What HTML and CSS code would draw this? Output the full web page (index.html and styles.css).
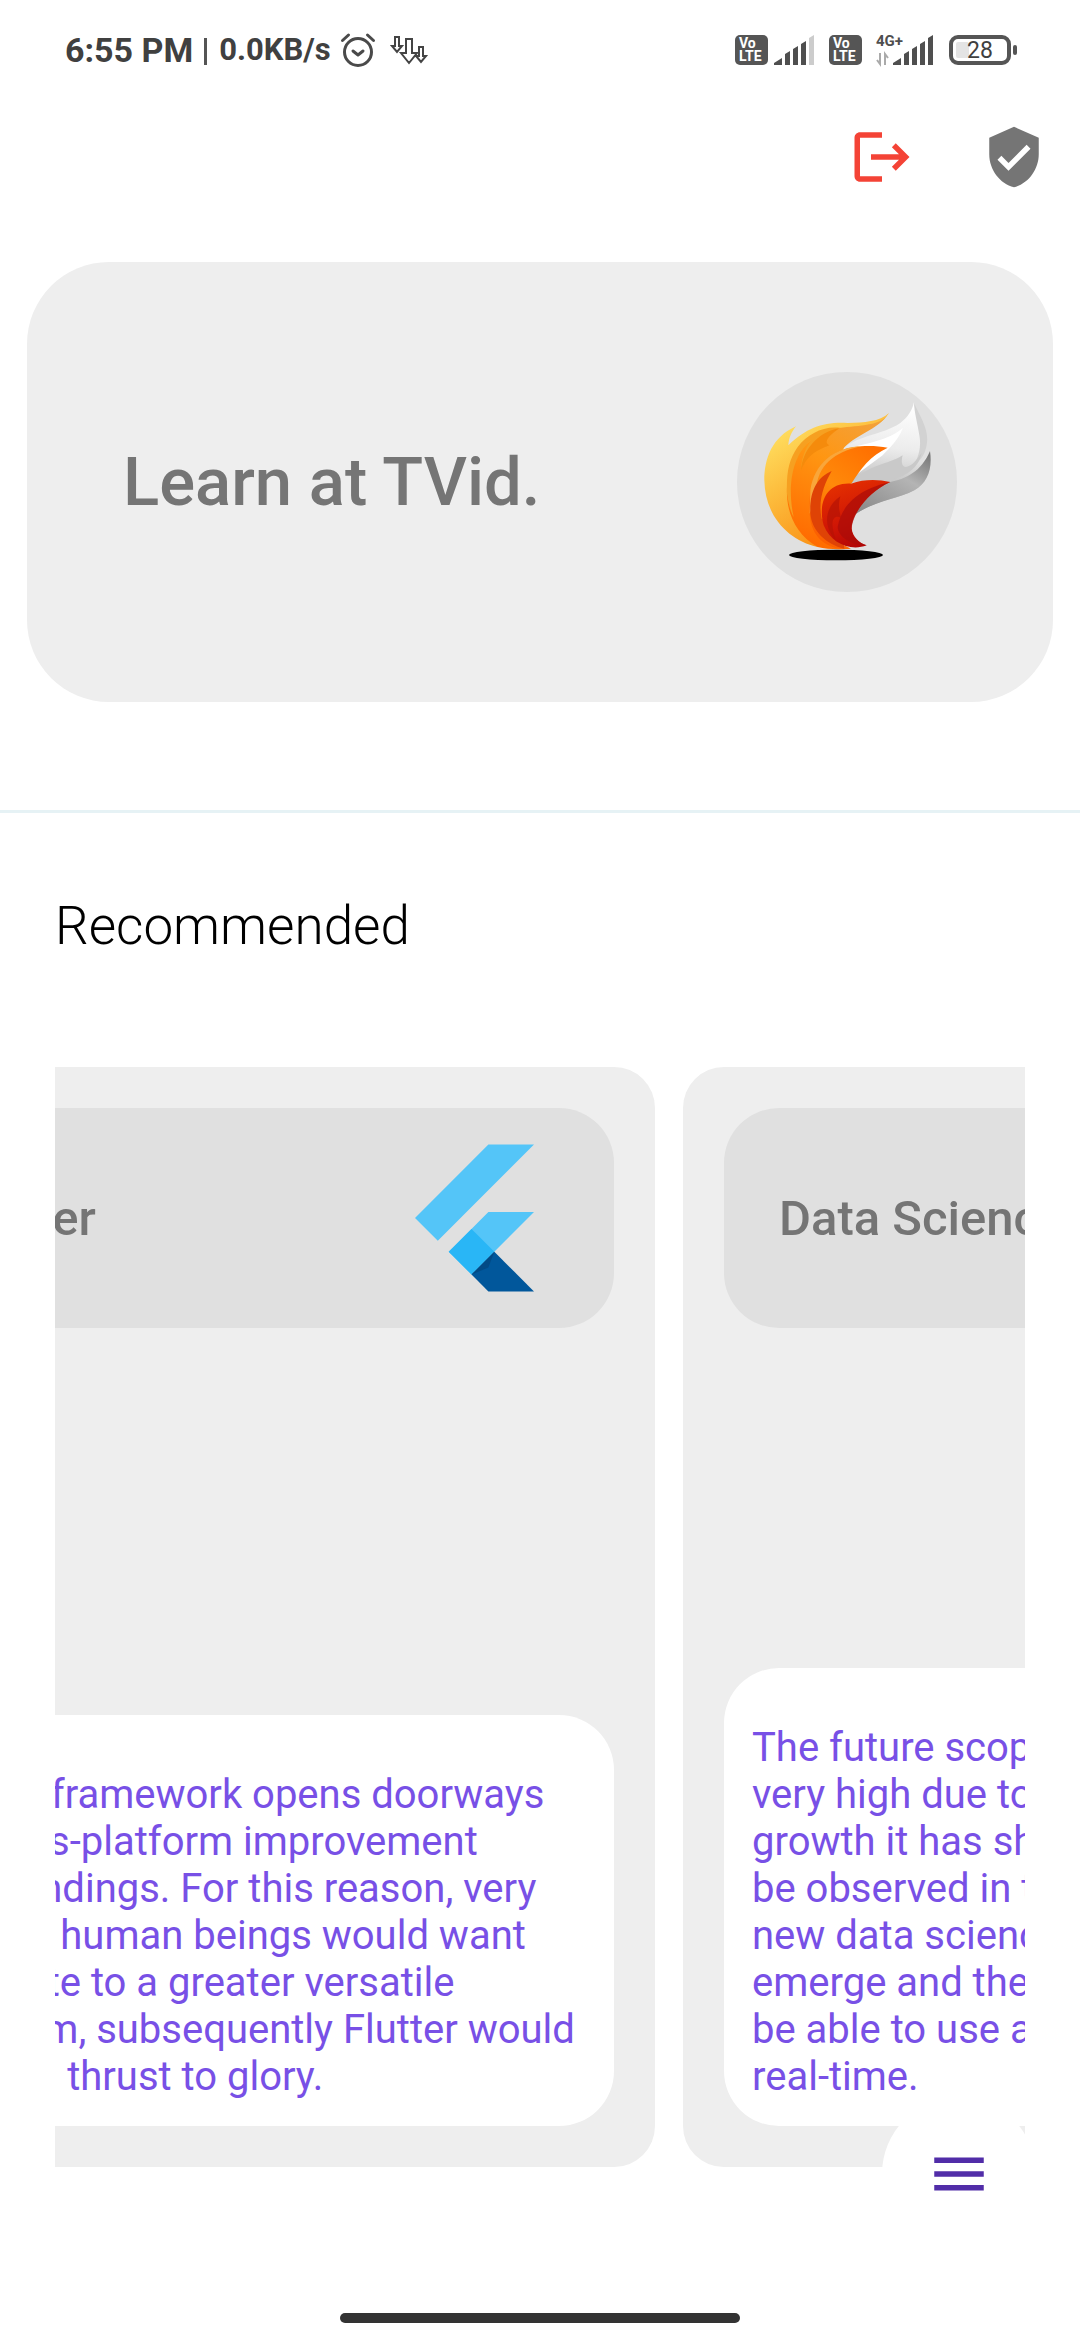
FILE: index.html
```html
<!DOCTYPE html>
<html lang="en">
<head>
<meta charset="utf-8">
<meta name="viewport" content="width=device-width, initial-scale=1">
<title>TVid</title>
<link rel="stylesheet" href="styles.css">
</head>
<body>
<div class="screen">
  <div class="status">
    <div class="status-left">
      <span class="clock">6:55 PM</span>
      <span class="bar"></span>
      <span class="speed">0.0KB/s</span>
      <svg class="alarm" viewBox="0 0 36 36" fill="none" stroke="#4a4a4a" stroke-width="3" stroke-linecap="round" stroke-linejoin="round"><circle cx="18" cy="20" r="13.5"/><path d="M13 19l5 4 5-4M2.500 8.500l6-5.500M33.500 8.500l-6-5.500"/></svg>
      <svg class="arrows" viewBox="0 0 36 30" fill="none" stroke="#444" stroke-width="2"><path d="M4 2h4v9h3l-5 6-5-6h3zM15 4h6v14h5l-8 10-8-10h5zM28 12h4v9h3l-5 6-5-6h3z"/></svg>
    </div>
    <div class="status-right">
      <svg class="volte" viewBox="0 0 33 30"><rect width="33" height="30" rx="5" fill="#555"/><text x="4" y="13" class="volte-text">Vo</text><text x="4" y="26" class="volte-text">LTE</text></svg>
      <svg class="signal" viewBox="0 0 41 30" fill="#4f4f4f"><path d="M0 30v-2l8-5v7zM11 30V19l5-3v14zM19 30V14l5-3v19zM27 30V9l5-3v24z"/><path d="M35 30V3l5-3v30z" fill="#ccc"/></svg>
      <svg class="volte second" viewBox="0 0 33 30"><rect width="33" height="30" rx="5" fill="#555"/><text x="4" y="13" class="volte-text">Vo</text><text x="4" y="26" class="volte-text">LTE</text></svg>
      <svg class="mobile" viewBox="0 0 58 32" fill="#4f4f4f"><text x="0" y="12" class="net-text">4G+</text><path d="M17 31v-2l8-5v7zM28 31V20l5-3v14zM36 31V15l5-3v19zM44 31V10l5-3v24zM52 31V4l5-3v30z"/><path d="M4 19v11l-3-4M9 31V20l3 4" fill="none" stroke="#aaa" stroke-width="2"/></svg>
      <svg class="battery" viewBox="0 0 69 30"><rect x="2" y="2" width="58" height="26" rx="7" fill="none" stroke="#555" stroke-width="4"/><rect x="7" y="7" width="13" height="16" rx="2" fill="#e4e4e4"/><rect x="64" y="10" width="4" height="10" rx="2" fill="#555"/><text x="18" y="23" class="battery-text">28</text></svg>
    </div>
  </div>

  <header class="appbar">
    <button class="icon-button logout" aria-label="Log out"><svg viewBox="0 0 24 24" fill="currentColor"><path d="M17 7l-1.410 1.410L18.170 11H8v2h10.170l-2.580 2.580L17 17l5-5zM4 5h8V3H4c-1.100 0-2 .9-2 2v14c0 1.100.9 2 2 2h8v-2H4V5z"/></svg></button>
    <button class="icon-button" aria-label="Privacy"><svg viewBox="0 0 24 24" fill="currentColor"><path d="M12 1L3 5v6c0 5.550 3.840 10.740 9 12 5.160-1.260 9-6.450 9-12V5l-9-4zm-2 16l-4-4 1.410-1.410L10 14.170l6.590-6.590L18 9l-8 8z"/></svg></button>
  </header>

  <main>
    <section class="hero">
      <h1>Learn at TVid.</h1>
      <svg class="logo" viewBox="108 95 660 660" aria-hidden="true">
        <defs>
          <linearGradient id="gold" x1="0" y1="0" x2="0.6" y2="1"><stop offset="0" stop-color="#ffec6e"/><stop offset="0.45" stop-color="#fdc040"/><stop offset="1" stop-color="#f98a10"/></linearGradient>
          <linearGradient id="amber" x1="0.7" y1="0" x2="0.3" y2="1"><stop offset="0" stop-color="#f3a13a"/><stop offset="0.4" stop-color="#ff9612"/><stop offset="1" stop-color="#ff6a00"/></linearGradient>
          <linearGradient id="orange" x1="0.8" y1="0" x2="0.2" y2="1"><stop offset="0" stop-color="#ff6f00"/><stop offset="0.5" stop-color="#ff8a0a"/><stop offset="1" stop-color="#fa5a00"/></linearGradient>
          <linearGradient id="red" x1="0.2" y1="0" x2="0.6" y2="1"><stop offset="0" stop-color="#e63200"/><stop offset="0.6" stop-color="#cf1505"/><stop offset="1" stop-color="#b00505"/></linearGradient>
          <linearGradient id="silver" x1="0.5" y1="0" x2="0.4" y2="1"><stop offset="0" stop-color="#fff"/><stop offset="0.4" stop-color="#ececec"/><stop offset="1" stop-color="#a0a0a0"/></linearGradient>
          <linearGradient id="steel" x1="0.9" y1="0" x2="0.2" y2="1"><stop offset="0" stop-color="#777"/><stop offset="0.4" stop-color="#b4b4b4"/><stop offset="1" stop-color="#8c8c8c"/></linearGradient>
        </defs>
        <circle cx="438" cy="425" r="330" fill="#e0e0e0"/>
        <path d="M415 335C460 285 545 285 598 248C622 230 634 208 639 186C645 228 672 258 663 315C658 342 648 358 640 374C664 364 680 350 687 332C695 385 680 428 640 450C590 476 520 482 465 520L440 430Z" fill="url(#silver)"/>
        <path d="M639 186C652 225 694 272 673 330C668 348 655 363 640 374C652 350 662 320 655 285C650 250 640 220 639 186Z" fill="#d2d2d2"/>
        <path d="M425 328C490 310 565 300 606 262C592 300 565 322 545 345L470 400Z" fill="#fff"/>
        <path d="M450 430C500 370 560 375 605 345C598 372 606 385 622 378C640 372 650 350 662 338C654 380 620 405 575 418L460 470Z" fill="#c9c9c9"/>
        <path d="M462 522C485 470 530 440 568 425C615 415 660 395 687 332C695 385 680 428 640 450C590 476 520 482 462 522Z" fill="url(#steel)"/>
        <path d="M285 258C213 290 190 355 190 420C192 528 262 600 350 620L380 450L425 328C450 270 530 275 564 218C535 245 490 246 440 248C370 244 320 260 262 315C264 290 272 275 285 258Z" fill="url(#gold)"/>
        <path d="M425 328C455 285 535 268 564 218C544 258 475 254 415 263C320 280 265 350 258 440C254 510 280 580 350 620C375 626 405 628 435 626L350 480C370 400 395 360 425 328Z" fill="url(#amber)"/>
        <path d="M300 395C305 330 350 280 420 263C370 255 320 280 290 320C262 360 256 400 258 460C264 500 272 520 278 530C260 450 268 350 330 300C310 330 300 360 300 395Z" fill="#f6a021"/>
        <path d="M300 392C320 340 350 330 385 315C370 308 375 292 415 264C350 275 304 330 300 392Z" fill="#f58b0c"/>
        <path d="M560 322C510 345 478 385 450 432L400 600L450 625C390 632 330 600 326 520C318 400 370 325 480 318C510 316 535 318 560 322Z" fill="url(#orange)"/>
        <path d="M328 450C340 370 400 320 480 318C400 335 350 375 345 450C340 490 330 510 326 520Z" fill="#f9a63a"/>
        <path d="M392 392C350 410 325 450 328 520C332 570 375 612 430 625L420 560L362 535C350 480 370 430 392 392Z" fill="#df4306"/>
        <path d="M568 425C500 455 450 525 452 565C455 590 475 608 497 615C450 634 390 610 368 555C350 490 375 425 450 430C490 416 530 417 568 425Z" fill="url(#red)"/>
        <path d="M568 425C500 440 425 475 410 560C412 590 450 615 497 615C470 606 452 590 452 565C455 520 500 455 568 425Z" fill="#a90c08" opacity="0.7"/>
        <path d="M418 468C410 500 416 515 420 532C395 520 385 545 405 600C365 560 370 500 418 468Z" fill="#b51206" opacity="0.7"/>
        <ellipse cx="405" cy="644" rx="141" ry="16"/>
      </svg>
    </section>

    <section class="recommended">
      <h2>Recommended</h2>
      <div class="carousel">
        <article class="card flutter">
          <div class="card-head">
            <h3>Flutter</h3>
            <svg class="flutter-logo" viewBox="0 0 120 148" aria-hidden="true"><path d="M74 0h46L23 97 0 74zM74 68h46L57 131l-23-23z" fill="#54c5f8"/><path d="M34 108l23-23 23 23-23 23z" fill="#29b6f6"/><path d="M57 131l23-23 40 40H74z" fill="#01579b"/><path d="M57 131l17-7 6-16z" fill="#024a85"/></svg>
          </div>
          <p>Flutter framework opens doorways<br>to cross-platform improvement<br>surroundings. For this reason, very<br>quickly human beings would want<br>to locate to a greater versatile<br>platform, subsequently Flutter would<br>general thrust to glory.</p>
        </article>
        <article class="card">
          <div class="card-head"><h3>Data Science</h3></div>
          <p>The future scope of Data Science is<br>very high due to the exponential<br>growth it has shown. It can easily<br>be observed in the years that<br>new data science jobs will<br>emerge and the experts will<br>be able to use all of it in<br>real-time.</p>
        </article>
      </div>
    </section>
  </main>

  <button class="fab" aria-label="Menu"><svg viewBox="0 0 24 24" fill="currentColor"><path d="M3 18h18v-2H3v2zm0-5h18v-2H3v2zm0-7v2h18V6H3z"/></svg></button>
  <div class="home-bar"></div>
</div>
</body>
</html>
```
FILE: styles.css
```css
* { box-sizing: border-box; }
body { margin: 0; background: #fff; font-family: Roboto, sans-serif; color: #000; }
h1, h2, h3, p { margin: 0; font-weight: 400; }
button { border: 0; padding: 0; background: none; }
svg { display: block; flex: none; }

.screen { position: relative; display: flex; flex-direction: column; min-height: 100vh; overflow: hidden; }

.status { display: flex; justify-content: space-between; height: 91px; padding: 8px 62px 0 65px; color: #404040; }
.status svg { overflow: visible; }
.status-left, .status-right { display: flex; align-items: center; }
.clock { font-size: 34px; font-weight: 700; }
.bar { width: 3px; height: 27px; margin: 4px 12px 0 11px; background: #555; }
.speed { font-size: 31px; font-weight: 700; }
.alarm { width: 36px; height: 36px; margin-left: 9px; }
.arrows { width: 36px; height: 30px; margin-left: 15px; }
.volte { width: 33px; height: 30px; }
.second { margin-left: 14px; }
.volte-text { font: 700 14px Roboto, sans-serif; fill: #fff; }
.signal { width: 41px; height: 30px; margin-left: 6px; }
.mobile { width: 58px; height: 32px; margin-left: 14px; }
.net-text { font: 700 15px Roboto, sans-serif; }
.battery { width: 69px; height: 30px; margin-left: 15px; }
.battery-text { font: 400 23px Roboto, sans-serif; fill: #404040; }

.appbar { display: flex; justify-content: flex-end; }
.icon-button { display: flex; align-items: center; justify-content: center; width: 132px; height: 132px; color: #757575; }
.icon-button svg, .fab svg { width: 66px; height: 66px; }
.icon-button.logout { color: #f44336; }

.hero { display: flex; align-items: center; justify-content: space-between; margin: 39px 27px 0; padding: 110px 96px; border-radius: 82px; background: #eee; }
.hero h1 { font-size: 67px; font-weight: 500; color: #757575; }
.logo { width: 220px; height: 220px; }

.recommended { margin-top: 108px; padding: 81px 55px 0; border-top: 3px solid #e6f2f5; }
.recommended h2 { font-size: 53px; line-height: 64px; font-weight: 300; }
.carousel { display: flex; gap: 28px; margin-top: 109px; overflow: hidden; }
.card { display: flex; flex: none; flex-direction: column; justify-content: space-between; width: 798px; height: 1100px; padding: 41px; border-radius: 41px; background: #eee; }
.flutter { margin-left: -198px; }
.card-head { display: flex; align-items: center; justify-content: space-between; height: 220px; padding: 0 80px 0 55px; border-radius: 55px; background: #e0e0e0; }
.card-head h3 { font-size: 49px; font-weight: 500; color: #757575; }
.flutter-logo { width: 119px; height: 148px; }
.card p { padding: 56px 28px 26px; border-radius: 55px; background: #fff; color: #7850e6; font-size: 40px; line-height: 47px; white-space: nowrap; }

.fab { position: absolute; right: 44px; bottom: 89px; display: flex; align-items: center; justify-content: center; width: 154px; height: 154px; border-radius: 50%; background: #fff; color: #512da8; }
.home-bar { width: 400px; height: 10px; margin: auto auto 17px; border-radius: 5px; background: #333; }
```
